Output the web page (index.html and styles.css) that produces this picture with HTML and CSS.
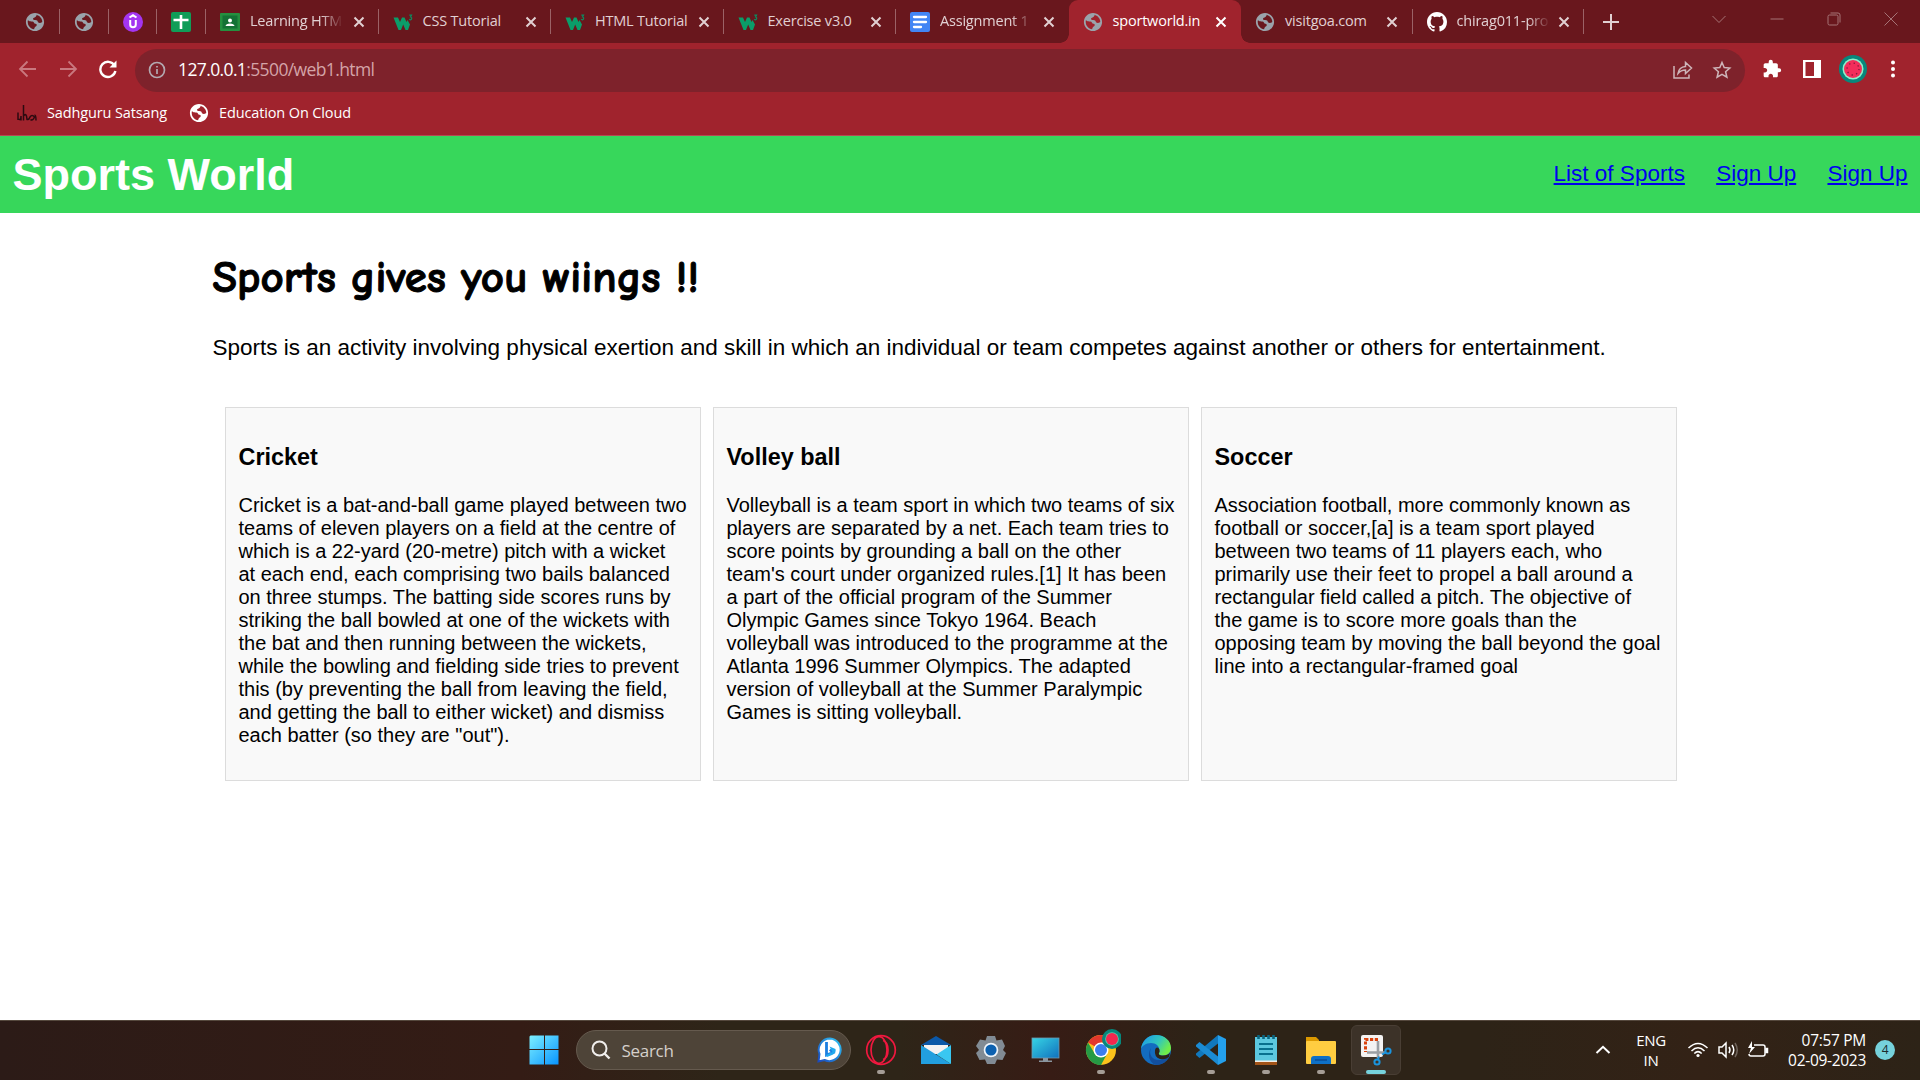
FILE: index.html
```html
<!DOCTYPE html>
<html lang="en">
<head>
<meta charset="utf-8">
<title>sportworld.in</title>
<link rel="stylesheet" href="styles.css">
</head>
<body>
<svg class="defs" width="0" height="0">
  <symbol id="globe" viewBox="1 1 22 22"><path fill="currentColor" d="M12 2C6.480 2 2 6.480 2 12s4.480 10 10 10 10-4.480 10-10S17.520 2 12 2zm-1 17.930c-3.950-.49-7-3.850-7-7.930 0-.62.080-1.210.21-1.790 2 1.600 3.600 1.200 4.800 1.200 2 0 1.500 2.400 3.500 2.600 2.200.2 1.500 2.500.2 3-1 .5-1.200 1.300-1.710 2.920zm6.900-2.540c1.400-1.400 2.100-3.300 2.100-5.390-2 1.500-4.500 1.500-5-.5-.4-2-2.500-1.500-4-1.700-1.800-.3-1.500-2.600.5-2.800 1.600-.2 1.500-1.400 2.500-2.600-.6-.2-1.300-.35-2-.35 2.930-.2 8 2.600 8 7.950 0 2.080-.8 3.970-2.100 5.390z"/></symbol>
  <symbol id="close" viewBox="0 0 12 12"><path d="M1.500 1.500L10.500 10.500M10.500 1.500L1.500 10.500" stroke="currentColor" stroke-width="2"/></symbol>
  <symbol id="w3" viewBox="0 0 20 20"><path d="M.5 5.500H5L7 10L9 5.500H11.500L13.500 10L14.500 8L17 12.500L15 18H12.500L10.200 12.500L8 18H5.500Z" fill="#0b9d69"/><path d="M16.300 3.200H18.500L17.500 5Q19.200 5.500 18.500 7T16.200 7.200" fill="none" stroke="#0b8d60" stroke-width="1.200"/></symbol>
</svg>

<header class="browser">
  <div class="tabs">
    <div class="tab pinned"><svg class="fav muted"><use href="#globe"/></svg></div>
    <div class="tab pinned"><svg class="fav muted"><use href="#globe"/></svg></div>
    <div class="tab pinned"><svg class="fav" viewBox="0 0 20 20"><circle cx="10" cy="10" r="10" fill="#a435f0"/><path d="M6.500 5.500L10 3.300L13.500 5.500M7.200 8V12.500Q7.200 15.300 10 15.300T12.800 12.500V8" fill="none" stroke="#fff" stroke-width="2"/></svg></div>
    <div class="tab pinned"><svg class="fav" viewBox="0 0 20 20"><rect width="20" height="20" rx="2" fill="#109d58"/><path d="M10 3V17M2.500 8H17.500" stroke="#fff" stroke-width="2.600"/></svg></div>
    <div class="tab"><svg class="fav" viewBox="0 0 20 20"><rect y="1" width="20" height="18" rx="1" fill="#25903f"/><rect x="2.500" y="3.500" width="15" height="13" fill="#147235"/><circle cx="10" cy="8.500" r="2" fill="#fff"/><path d="M5.500 14Q6 11.500 10 11.500T14.500 14Z" fill="#fff"/></svg><span class="label fade">Learning HTM</span><svg class="x"><use href="#close"/></svg></div>
    <div class="tab"><svg class="fav"><use href="#w3"/></svg><span class="label">CSS Tutorial</span><svg class="x"><use href="#close"/></svg></div>
    <div class="tab"><svg class="fav"><use href="#w3"/></svg><span class="label">HTML Tutorial</span><svg class="x"><use href="#close"/></svg></div>
    <div class="tab"><svg class="fav"><use href="#w3"/></svg><span class="label">Exercise v3.0</span><svg class="x"><use href="#close"/></svg></div>
    <div class="tab before-active"><svg class="fav" viewBox="0 0 20 20"><rect width="20" height="20" rx="2" fill="#4285f4"/><path d="M4 5H16M4 10H16M4 15H11" stroke="#fff" stroke-width="2.300" stroke-linecap="round"/></svg><span class="label fade">Assignment 1</span><svg class="x"><use href="#close"/></svg></div>
    <div class="tab active"><svg class="fav muted"><use href="#globe"/></svg><span class="label">sportworld.in</span><svg class="x"><use href="#close"/></svg></div>
    <div class="tab narrow"><svg class="fav muted"><use href="#globe"/></svg><span class="label">visitgoa.com</span><svg class="x"><use href="#close"/></svg></div>
    <div class="tab narrow"><svg class="fav" viewBox="0 0 16 16"><path fill="#fff" d="M8 0C3.580 0 0 3.580 0 8c0 3.540 2.290 6.530 5.470 7.590.4.070.55-.17.55-.38 0-.19-.01-.82-.01-1.490-2.010.37-2.530-.49-2.690-.94-.09-.23-.48-.94-.82-1.130-.28-.15-.68-.52-.01-.53.63-.01 1.080.58 1.230.82.72 1.210 1.870.87 2.330.66.070-.52.28-.87.51-1.070-1.780-.2-3.640-.89-3.640-3.950 0-.87.31-1.590.82-2.150-.08-.2-.36-1.020.08-2.120 0 0 .67-.21 2.200.82.64-.18 1.320-.27 2-.27s1.360.09 2 .27c1.530-1.040 2.200-.82 2.200-.82.44 1.100.16 1.920.08 2.120.51.56.82 1.270.82 2.150 0 3.070-1.870 3.750-3.650 3.950.29.25.54.73.54 1.480 0 1.070-.01 1.930-.01 2.200 0 .21.15.46.55.38A8.010 8.010 0 0 0 16 8c0-4.420-3.580-8-8-8z"/></svg><span class="label fade">chirag011-pro</span><svg class="x"><use href="#close"/></svg></div>
    <svg class="plus" viewBox="0 0 16 16"><path d="M8 0V16M0 8H16" stroke="currentColor" stroke-width="2"/></svg>
    <div class="window-controls">
      <svg viewBox="0 0 14 14"><path d="M.5 4L7 10.500L13.500 4"/></svg>
      <svg viewBox="0 0 14 14"><path d="M.5 7H13.500"/></svg>
      <svg viewBox="0 0 14 14"><rect x="1" y="3" width="10" height="10" rx="1.500"/><path d="M3.500 1H11Q13 1 13 3V10.500"/></svg>
      <svg viewBox="0 0 14 14"><path d="M.5 .5L13.500 13.500M13.500 .5L.5 13.500"/></svg>
    </div>
  </div>

  <div class="toolbar">
    <svg class="nav dim" viewBox="0 0 20 20"><path d="M18 10H2.500M9.500 2.500L2 10L9.500 17.500"/></svg>
    <svg class="nav dim" viewBox="0 0 20 20"><path d="M2 10H17.500M10.500 2.500L18 10L10.500 17.500"/></svg>
    <svg class="nav" viewBox="0 0 20 20"><path d="M16.500 6.500A7.600 7.600 0 1 0 17.400 12" stroke-width="2.400"/><path d="M18.500 1.500V8.500H11.500Z" fill="currentColor" stroke="none"/></svg>
    <div class="omnibox">
      <svg class="info" viewBox="0 0 18 18"><circle cx="9" cy="9" r="7.500"/><path d="M9 8V13M9 5V6.500"/></svg>
      <span class="url"><b>127.0.0.1</b>:5500/web1.html</span>
      <svg class="share" viewBox="0 0 20 20"><path d="M1 6V18H16V14.500M5 13.500Q6 7 12.500 6.500V2.500L18.500 8L12.500 13.500V10Q8 10 5 13.500Z"/></svg>
      <svg class="star" viewBox="0 0 20 20"><path d="M10 2.500L12.200 7.600L17.800 8.100L13.600 11.800L14.900 17.200L10 14.300L5.100 17.200L6.400 11.800L2.200 8.100L7.800 7.600Z"/></svg>
    </div>
    <svg class="tool" viewBox="0 0 24 24"><path fill="currentColor" d="M20.500 11H19V7c0-1.100-.9-2-2-2h-4V3.500a2.500 2.500 0 0 0-5 0V5H4c-1.100 0-2 .9-2 2v3.800h1.500c1.500 0 2.700 1.200 2.700 2.700S5 16.200 3.500 16.200H2V20c0 1.100.9 2 2 2h3.800v-1.500c0-1.500 1.200-2.700 2.700-2.700s2.700 1.200 2.700 2.700V22H17c1.100 0 2-.9 2-2v-4h1.500a2.500 2.500 0 0 0 0-5z"/></svg>
    <svg class="tool" viewBox="0 0 20 20"><path fill="currentColor" fill-rule="evenodd" d="M1 1H19V19H1ZM3.500 3V17H12V3Z"/></svg>
    <svg class="avatar" viewBox="0 0 28 28"><circle cx="14" cy="14" r="14" fill="#07877c"/><circle cx="14" cy="14" r="10.500" fill="#8ff0cb"/><circle cx="14" cy="14" r="9" fill="#f32d5b"/><circle cx="14" cy="14" r="6" fill="none" stroke="#7d1b37" stroke-width="1.300" stroke-dasharray="1.300 3.400"/></svg>
    <svg class="dots" viewBox="0 0 4 18"><circle cx="2" cy="2.500" r="2"/><circle cx="2" cy="9" r="2"/><circle cx="2" cy="15.500" r="2"/></svg>
  </div>

  <div class="bookmarks">
    <svg class="isha" viewBox="0 0 20 20"><path d="M1 9.500V17M1 16Q4 18 4 13M4 13V17.500M6.500 2V17.500M6.500 13Q9.500 9 10 16.500Q12 17 13 14Q15 11 17.500 14Q16 18 13.500 16.500M17.500 12Q19 12 19 17.500"/></svg>
    <span class="bm-one">Sadhguru Satsang</span>
    <svg class="fav bm-globe"><use href="#globe"/></svg>
    <span class="bm-two">Education On Cloud</span>
  </div>
</header>

<div class="site-nav">
  <h1 class="brand">Sports World</h1>
  <nav class="links"><a href="#">List of Sports</a><a href="#">Sign Up</a><a href="#">Sign Up</a></nav>
</div>

<main class="page">
  <h2 class="slogan">Sports gives you wiings !!</h2>
  <p class="intro">Sports is an activity involving physical exertion and skill in which an individual or team competes against another or others for entertainment.</p>
  <div class="cards">
    <section class="card">
      <h3>Cricket</h3>
      <p>Cricket is a bat-and-ball game played between two<br>teams of eleven players on a field at the centre of<br>which is a 22-yard (20-metre) pitch with a wicket<br>at each end, each comprising two bails balanced<br>on three stumps. The batting side scores runs by<br>striking the ball bowled at one of the wickets with<br>the bat and then running between the wickets,<br>while the bowling and fielding side tries to prevent<br>this (by preventing the ball from leaving the field,<br>and getting the ball to either wicket) and dismiss<br>each batter (so they are "out").</p>
    </section>
    <section class="card">
      <h3>Volley ball</h3>
      <p>Volleyball is a team sport in which two teams of six<br>players are separated by a net. Each team tries to<br>score points by grounding a ball on the other<br>team's court under organized rules.[1] It has been<br>a part of the official program of the Summer<br>Olympic Games since Tokyo 1964. Beach<br>volleyball was introduced to the programme at the<br>Atlanta 1996 Summer Olympics. The adapted<br>version of volleyball at the Summer Paralympic<br>Games is sitting volleyball.</p>
    </section>
    <section class="card">
      <h3>Soccer</h3>
      <p>Association football, more commonly known as<br>football or soccer,[a] is a team sport played<br>between two teams of 11 players each, who<br>primarily use their feet to propel a ball around a<br>rectangular field called a pitch. The objective of<br>the game is to score more goals than the<br>opposing team by moving the ball beyond the goal<br>line into a rectangular-framed goal</p>
    </section>
  </div>
</main>

<footer class="taskbar">
  <div class="app"><svg width="30" height="30" viewBox="0 0 30 30"><defs><linearGradient id="win" x1="0" y1="0" x2="1" y2="1"><stop offset="0" stop-color="#7df0ff"/><stop offset="1" stop-color="#0894ff"/></linearGradient></defs><path fill="url(#win)" d="M1.500.5H15V14H.5V1.500ZM16 .5H29.500V14H16ZM.5 15H15V29.500H.5ZM16 15H29.500V29.500H16Z"/></svg></div>
  <div class="search">
    <svg width="20" height="20" viewBox="0 0 20 20"><circle cx="8.500" cy="8.500" r="7" fill="none" stroke="#f0eeec" stroke-width="2"/><path d="M13.500 13.500L18.500 18.500" stroke="#f0eeec" stroke-width="2.400"/></svg>
    <span>Search</span>
    <svg class="bing" width="26" height="26" viewBox="0 0 26 26"><defs><linearGradient id="bg" x1="1" y1="0" x2="0" y2="1"><stop offset="0" stop-color="#2fc4f5"/><stop offset="1" stop-color="#1a49bd"/></linearGradient></defs><path d="M13 1.500A11.300 11.300 0 1 1 7.500 23L1.500 24.500L2.500 17A11.300 11.300 0 0 1 13 1.500Z" fill="#fff" stroke="url(#bg)" stroke-width="2"/><path d="M9.500 5V18L16 15.500L13 12.500" fill="none" stroke="#1b7ee0" stroke-width="2.800"/><path d="M12.500 9.500L18.500 12Q19.500 16 15 18L10 20L9 18L15.500 15Z" fill="#22a9ed"/></svg>
  </div>
  <div class="app running"><svg width="32" height="32" viewBox="0 0 32 32" fill="none" stroke="#f0183f" stroke-width="1.700"><circle cx="16" cy="16" r="14.300"/><ellipse cx="14" cy="16" rx="8" ry="13.300"/><path d="M18 6.500Q23 8 23 16T18 25.500"/></svg></div>
  <div class="app"><svg width="32" height="32" viewBox="0 0 32 32"><path d="M1 11L16 2L31 11Z" fill="#0b58a8"/><path d="M4 11H28V20H4Z" fill="#f3f1f2"/><path d="M1 11L31 30H1Z" fill="#229fdf"/><path d="M31 11V30L16.500 20.500Z" fill="#39c7f1"/></svg></div>
  <div class="app"><svg width="32" height="32" viewBox="0 0 32 32"><path d="M12 2H20L21.500 6.500L27 5.500L30 12L28 16L31 19L27.500 26L22 25.500L20 30H12L10 25.500L4.500 26L1 19L4 16L1 12L5 5.500L10.500 6.500Z" fill="#818b94"/><circle cx="16" cy="16" r="7.300" fill="#eef4fa"/><circle cx="16" cy="16" r="5.600" fill="#0c61b0"/></svg></div>
  <div class="app"><svg width="32" height="32" viewBox="0 0 32 32"><defs><linearGradient id="scr" x1="0" y1="0" x2="1" y2="1"><stop offset="0" stop-color="#36d5e5"/><stop offset="1" stop-color="#1170bd"/></linearGradient></defs><rect x="2" y="4" width="27" height="20" fill="url(#scr)" stroke="#6e9ab0" stroke-width=".8"/><path d="M13 24H18V26.500H22V28H9V26.500H13Z" fill="#8b969f"/></svg></div>
  <div class="app running"><svg width="36" height="38" viewBox="0 0 36 38"><circle cx="16" cy="22" r="15" fill="#fcc21b"/><path d="M16 22L3 14.500A15 15 0 0 1 29 14.500H16Z" fill="#e2382c"/><path d="M3 14.500L10 26L16.500 37A15 15 0 0 1 3 14.500Z" fill="#269a45"/><path d="M22 26L16 37H13L8 25Z" fill="#269a45"/><circle cx="16" cy="22" r="7.500" fill="#fff"/><circle cx="16" cy="22" r="6" fill="#3b7ded"/><circle cx="27" cy="11" r="10" fill="#07877c"/><circle cx="27" cy="11" r="6.800" fill="#5bc8ad"/><circle cx="27" cy="11" r="6" fill="#f4264f"/></svg></div>
  <div class="app"><svg width="32" height="32" viewBox="0 0 32 32"><defs><linearGradient id="ed" x1="0" y1="0" x2="1" y2=".5"><stop offset=".2" stop-color="#21a5df"/><stop offset=".6" stop-color="#32c7bb"/><stop offset="1" stop-color="#70ed49"/></linearGradient></defs><circle cx="16" cy="16" r="15" fill="#136cc0"/><path d="M1 15C2 7 8 1 16 1C25 1 31 7 31 14C31 19 27 21.500 23 21.500C19 21.500 18 20 19.500 18C20 12 16 9 11 9C6 9 2 12 1 15Z" fill="url(#ed)"/><path d="M11 14C8 21 13 27 21 26L29 23C26 28 22 31 16 31C9 29 7 20 11 14Z" fill="#124f9f"/><path d="M19.500 18C18 20 19 21.500 23 21.500Q28 21.500 30 18.500L29 23Q25 26 20 25Q14 23 15 16Q16 12.500 18.500 14Q20 15.500 19.500 18Z" fill="#2e2318"/></svg></div>
  <div class="app running"><svg width="32" height="32" viewBox="0 0 32 32"><path d="M23 1L31 5V27L23 31Z" fill="#24a0ed"/><path d="M23 1V9.500L4.500 24L1 21V19.500Z" fill="#1178bd"/><path d="M23 31V22.500L4.500 8L1 11V12.500Z" fill="#1b8bd3"/></svg></div>
  <div class="app running"><svg width="32" height="32" viewBox="0 0 32 32"><rect x="5" y="26" width="22" height="5" fill="#a25418"/><rect x="5" y="25" width="22" height="3" fill="#f1eee8"/><rect x="5" y="3" width="22" height="23.500" fill="#5cc8e0"/><path d="M9 10H23M9 15H23M9 20H23" stroke="#08708f" stroke-width="2"/><path d="M8.500 1V5M13.500 1V5M18.500 1V5M23.500 1V5" stroke="#0b6681" stroke-width="2.600"/></svg></div>
  <div class="app running"><svg width="32" height="32" viewBox="0 0 32 32"><path d="M1 3H11L14 6V9H1Z" fill="#dc9900"/><rect x="1" y="7" width="30" height="23" rx="1" fill="#ffcd41"/><path d="M6 30V25Q6 22 9 22H23Q26 22 26 25V30Z" fill="#0e70c6"/><path d="M10 26H22" stroke="#0a4d96" stroke-width="1.500"/></svg></div>
  <div class="app selected"><svg width="32" height="32" viewBox="0 0 32 32"><rect x="1" y="1" width="22" height="22" rx="2" fill="#f4f3f3"/><path d="M18 5.500H5.500V18" fill="none" stroke="#d9420d" stroke-width="3" stroke-dasharray="3.200 1.600"/><path d="M18 7V24M7 18.500H25" stroke="#9ba0a5" stroke-width="2.600"/><g fill="none" stroke="#1a94de" stroke-width="2"><circle cx="28" cy="17" r="2.600"/><circle cx="17" cy="28" r="2.600"/><path d="M25.500 18.500L22 20.500M18 25.500L19 22.500"/></g></svg></div>

  <div class="tray">
    <svg class="up" width="16" height="10" viewBox="0 0 16 10"><path d="M1.500 8L8 1.800L14.500 8"/></svg>
    <div class="lang">ENG<br>IN</div>
    <svg class="wifi" width="22" height="18" viewBox="0 0 22 18"><path d="M1.500 7Q11-2 20.500 7M4.500 10Q11 3.500 17.500 10M7.300 12.500Q11 8.800 14.700 12.500"/><circle cx="11" cy="14.500" r="1.600" fill="#fff" stroke="none"/></svg>
    <svg class="vol" width="22" height="18" viewBox="0 0 22 18"><path d="M2 6H5L9 2V16L5 12H2ZM12 6Q14 9 12 12M15 4Q18.500 9 15 14"/><path d="M18 2Q22.500 9 18 16" opacity=".3"/></svg>
    <svg class="bat" width="22" height="18" viewBox="0 0 22 18"><path d="M7 4H16Q18 4 18 6V13Q18 15 16 15H4Q2 15 2 13"/><path d="M19 7.500H20.500V11.500H19Z" fill="#fff"/><path d="M5 0L1 7H4L2 13L8 6H5Z" fill="#fff" stroke="none"/></svg>
    <div class="clock">07:57 PM<br>02-09-2023</div>
    <div class="count">4</div>
  </div>
</footer>
</body>
</html>
```
FILE: styles.css
```css
* { box-sizing: border-box; }
body {
  margin: 0;
  width: 1920px;
  height: 1080px;
  overflow: hidden;
  display: flex;
  flex-direction: column;
  background: #fff;
  color: #000;
  font-family: "Liberation Sans", Arial, sans-serif;
}
svg { flex: none; }
.defs { display: none; }

/* Browser chrome */
.browser {
  flex: none;
  height: 136px;
  background: #a0232d;
  border-bottom: 1px solid #b34b53;
  font-family: "Open Sans", "Noto Sans", sans-serif;
  color: #fff;
}
.tabs {
  display: flex;
  align-items: center;
  height: 43px;
  padding-left: 11px;
  background: #69171d;
  color: #e1d0d2;
}
.tab {
  display: flex;
  align-items: center;
  width: 172.5px;
  height: 43px;
  padding-left: 14px;
  font-size: 14.5px;
  letter-spacing: -0.2px;
  background: linear-gradient(#9b6266, #9b6266) right 9px / 1px 25px no-repeat;
}
.tab.pinned { width: 48.75px; padding-left: 14px; }
.tab.narrow { width: 171.5px; }
.tab.before-active { background: #69171d; }
.tab.active {
  position: relative;
  background: #a0232d;
  border-radius: 9px 9px 0 0;
  color: #fff;
}
.tab.active::before, .tab.active::after {
  content: "";
  position: absolute;
  bottom: 0;
  width: 9px;
  height: 9px;
}
.tab.active::before { left: -9px; background: radial-gradient(circle at 0 0, transparent 8.500px, #a0232d 9px); }
.tab.active::after { right: -9px; background: radial-gradient(circle at 100% 0, transparent 8.500px, #a0232d 9px); }
.fav { width: 20px; height: 20px; }
.muted { color: #9aa3ab; }
.label {
  width: 95px;
  margin: 0 5px 2px 10px;
  white-space: nowrap;
}
.fade { -webkit-mask-image: linear-gradient(to right, #000 75%, transparent 98%); mask-image: linear-gradient(to right, #000 75%, transparent 98%); }
.x { width: 12px; height: 12px; margin-left: 2.500px; }
.narrow .x { margin-left: 1px; }
.plus { width: 16px; height: 16px; margin-left: 19px; }
.window-controls {
  display: flex;
  gap: 43.200px;
  margin: 0 22px 6px auto;
}
.window-controls svg { width: 14px; height: 14px; fill: none; stroke: #a67477; stroke-width: 1; }

.toolbar { display: flex; align-items: center; height: 50px; padding: 2px 25px 0 17.500px; }
.nav { width: 20px; height: 20px; margin-right: 20px; fill: none; stroke: currentColor; stroke-width: 1.8; }
.nav.dim { color: #c9787f; }
.omnibox {
  display: flex;
  align-items: center;
  width: 1610px;
  height: 43px;
  margin: 2px 17px 0 -2.500px;
  padding: 0 13px;
  border-radius: 22px;
  background: #7e222b;
}
.info { width: 18px; height: 18px; fill: none; stroke: #b3a9b0; stroke-width: 1.7; }
.url { margin: 0 auto 2px 12px; font-size: 17.500px; letter-spacing: -0.62px; color: #d4a4a8; }
.url b { font-weight: 400; color: #fff; }
.share, .star { width: 20px; height: 20px; fill: none; stroke: #ceb5b9; stroke-width: 1.5; }
.star { margin-left: 19px; }
.tool { width: 20px; height: 20px; margin-right: 20px; }
.avatar { width: 28px; height: 28px; margin: 0 24px 0 7px; }
.toolbar .tool + .avatar { margin-left: -3px; }
.dots { width: 4px; height: 18px; fill: #fff; }
.bookmarks { display: flex; align-items: center; height: 42px; padding: 0 0 3px 17px; font-size: 14.500px; letter-spacing: -0.13px; }
.isha { width: 20px; height: 20px; margin-right: 10px; fill: none; stroke: #2c0a10; stroke-width: 1.5; }
.bm-one { width: 142px; }
.bm-globe { margin-right: 10px; }

/* Web page */
.site-nav {
  flex: none;
  display: flex;
  align-items: center;
  justify-content: space-between;
  height: 77px;
  padding: 0 12.500px;
  background: #37d75b;
}
.brand { margin: 0; font-size: 45px; line-height: 52px; color: #fff; }
.links { display: flex; gap: 31.250px; padding-bottom: 2px; font-size: 22.500px; }
.links a { color: #0000ee; }
.page { flex: 1; padding: 36px 212.500px 0; }
.slogan {
  margin: 0;
  font-family: "Comic Sans MS", "Comic Neue", Lato, sans-serif;
  font-size: 45px;
  font-weight: 700;
  line-height: 56px;
  word-spacing: -1px;
  -webkit-text-stroke: 1px #000;
  white-space: nowrap;
}
.intro { margin: 29px 0 0; font-size: 22.500px; line-height: 27px; white-space: nowrap; }
.cards { display: flex; gap: 12px; margin: 46px 0 0 12.500px; }
.card {
  width: 476px;
  height: 374px;
  padding: 35px 12.500px 0;
  border: 1px solid #dcdcdc;
  background: #f9f9f9;
}
.card h3 { margin: 0; font-size: 23.400px; line-height: 28px; }
.card p { margin: 23px 0 0; font-size: 20px; line-height: 23px; white-space: nowrap; }

/* Taskbar */
.taskbar {
  flex: none;
  display: flex;
  align-items: center;
  height: 60px;
  padding: 0 0 1px 516.500px;
  border-top: 1px solid #55483d;
  background: linear-gradient(90deg, #2c1b17 0, #341c15 520px, #2e2518 720px, #2e2518 900px, #371c15 1050px, #2d2317 1200px, #2d2317 1480px, #332216 1700px, #2d2317 1920px);
  font-family: "Open Sans", "Noto Sans", sans-serif;
  color: #fff;
}
.app { display: flex; align-items: center; justify-content: center; width: 55px; height: 50px; position: relative; }
.running::after, .selected::after {
  content: "";
  position: absolute;
  left: 23.500px;
  bottom: 1px;
  width: 8px;
  height: 4px;
  border-radius: 2px;
  background: #a59d96;
}
.app.selected { width: 50px; margin-left: 2.500px; border: 1px solid #493e34; border-radius: 6px; background: #3c3228; }
.selected::after { left: 14px; bottom: 0; width: 20px; background: #76d2dc; }
.running svg[height="38"] { margin: -6px 0 0 4px; }
.search {
  display: flex;
  align-items: center;
  width: 275px;
  height: 40px;
  margin: 0 2.500px 0 4px;
  padding: 0 7px 0 14px;
  border: 1px solid #655a4e;
  border-radius: 20px;
  background: #4e4438;
  font-size: 17px;
  letter-spacing: -0.3px;
  color: #d5d0cb;
}
.search span { margin: 0 auto 0 11px; }
.tray { display: flex; align-items: center; margin: 0 25px 1px auto; font-size: 15px; line-height: 20px; letter-spacing: -0.3px; }
.tray svg { fill: none; stroke: #fff; stroke-width: 1.5; }
.tray .up { stroke-width: 2; }
.lang { width: 32px; margin: 0 20px 0 24px; text-align: center; }
.vol, .bat { margin-left: 8px; }
.clock { width: 84px; margin: 0 9px 0 13px; font-size: 15.500px; text-align: right; white-space: nowrap; }
.count { width: 20px; height: 20px; border-radius: 50%; background: #76d2dc; color: #1c2b2c; font-size: 12px; text-align: center; }
```
